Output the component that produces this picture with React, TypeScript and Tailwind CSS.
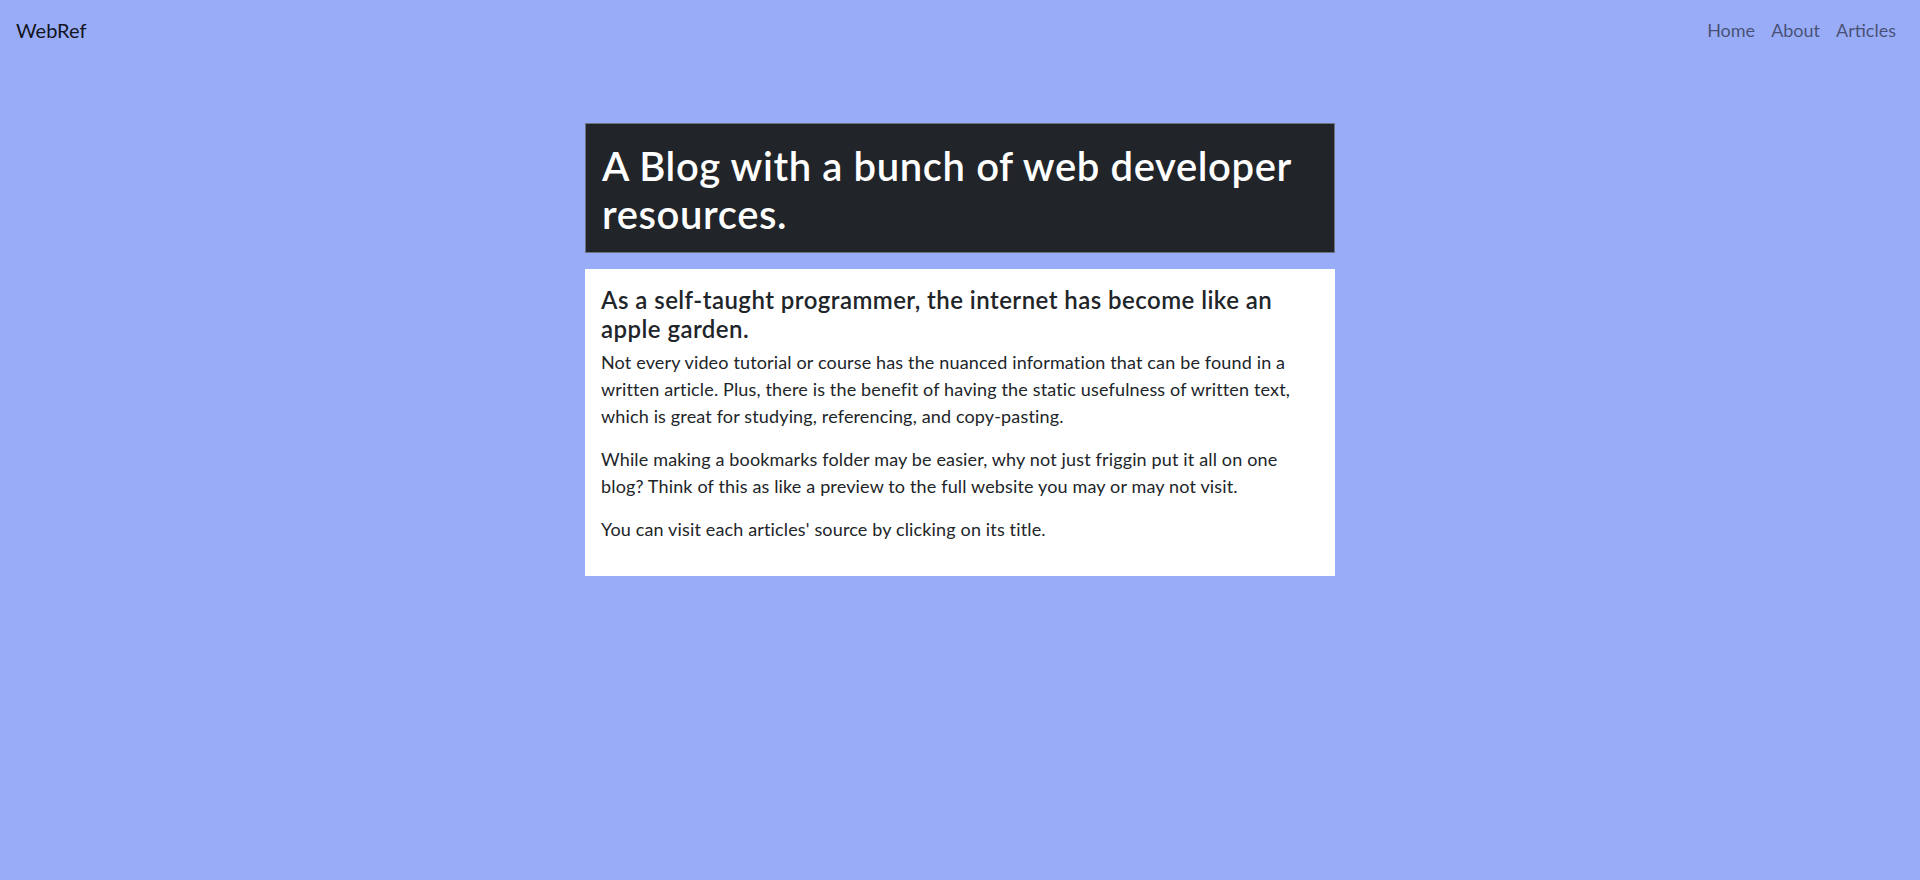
import React, { FC } from 'react';

const links = ['Home', 'About', 'Articles'];

const App: FC = () => {
  return (
    <div className="min-h-screen bg-[#99acf7] font-['Lato','Noto_Sans',sans-serif] text-[#212529]">
      <nav className="flex h-[60px] items-center justify-between px-4">
        <a href="#" className="text-[20px] leading-[30px] text-[rgba(0,0,0,0.9)]">
          WebRef
        </a>
        <ul className="flex items-center">
          {links.map((link) => (
            <li key={link}>
              <a href="#" className="block px-2 text-[18px] leading-[27px] text-[rgba(0,0,0,0.55)]">
                {link}
              </a>
            </li>
          ))}
        </ul>
      </nav>

      <main className="mx-auto mt-[63px] w-[750px]">
        <div className="mb-4 border border-[#6c757d] bg-[#212529] px-4 pt-[18px] pb-[14px]">
          <h1 className="text-[40px] font-semibold leading-[48px] tracking-[0.6px] text-white">
            A Blog with a bunch of web developer resources.
          </h1>
        </div>

        <div className="bg-white px-4 pt-[17px] pb-[17px]">
          <h4 className="mb-[5px] text-[24px] font-semibold leading-[28.8px] tracking-[0.45px]">
            As a self-taught programmer, the internet has become like an apple garden.
          </h4>
          <p className="mb-4 text-[18px] leading-[27px] tracking-[0.15px]">
            Not every video tutorial or course has the nuanced information that can be found in a
            written article. Plus, there is the benefit of having the static usefulness of written
            text, which is great for studying, referencing, and copy-pasting.
          </p>
          <p className="mb-4 text-[18px] leading-[27px] tracking-[0.15px]">
            While making a bookmarks folder may be easier, why not just friggin put it all on one
            blog? Think of this as like a preview to the full website you may or may not visit.
          </p>
          <p className="mb-4 text-[18px] leading-[27px] tracking-[0.15px]">
            You can visit each articles' source by clicking on its title.
          </p>
        </div>
      </main>
    </div>
  );
};

export default App;
